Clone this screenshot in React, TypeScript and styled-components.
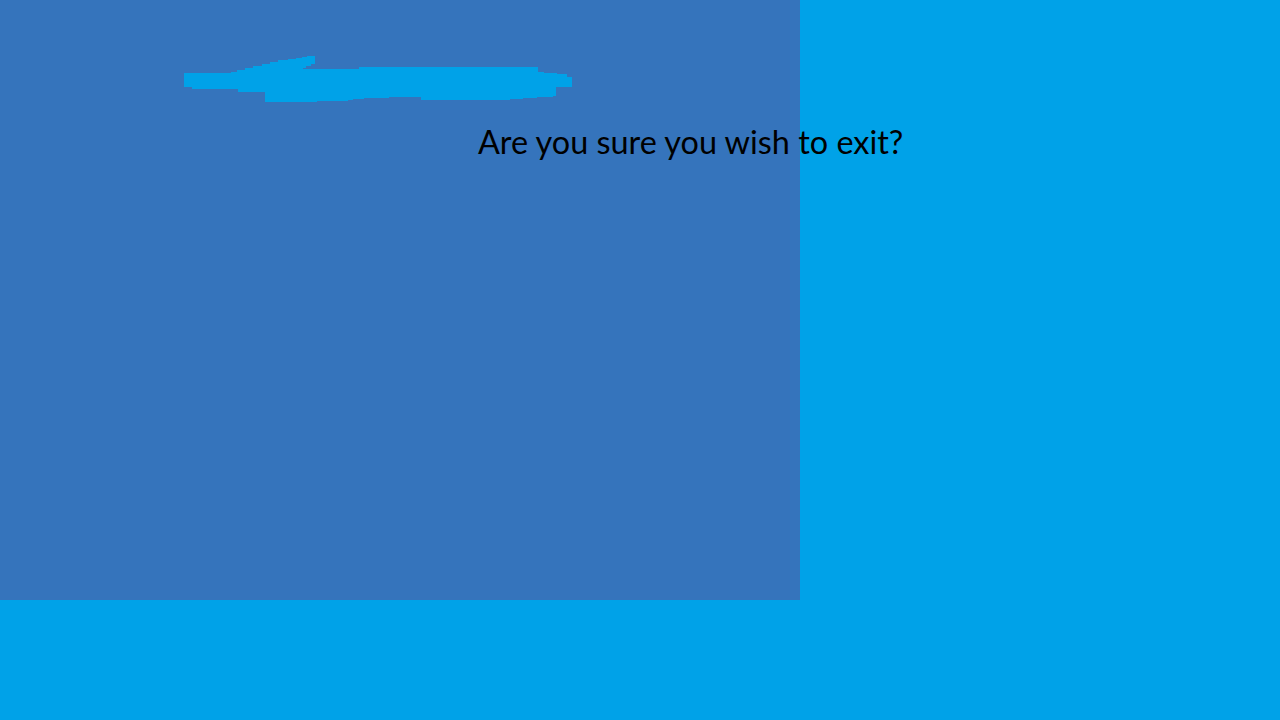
import React from "react";
import styled, { createGlobalStyle } from "styled-components";

const Global = createGlobalStyle`
  html, body { margin: 0; padding: 0; }
  body {
    background: #00a2e8;
    width: 1280px;
    height: 720px;
    overflow: hidden;
    font-family: "Lato", "Open Sans", sans-serif;
  }
`;

const Screen = styled.div`
  width: 1280px;
  height: 720px;
  background: #00a2e8;
`;

const Panel = styled.div`
  width: 800px;
  height: 600px;
  background: #3574bc;
  display: flex;
  flex-direction: column;
  align-items: flex-start;
  padding-top: 56px;
  box-sizing: border-box;
`;

const Stroke = styled.svg`
  display: block;
  margin-left: 184px;
  width: 388px;
  height: 46px;
`;

const Question = styled.div`
  margin-left: 478px;
  margin-top: 22px;
  white-space: nowrap;
  font-family: "Lato", "Open Sans", sans-serif;
  font-size: 32.4px;
  line-height: 36px;
  color: #000;
`;

const pts: [number, number][] = [
  [184, 73], [231, 73], [231, 72], [237, 72], [237, 70], [245, 70], [245, 68],
  [253, 68], [253, 66], [262, 66], [262, 64], [270, 64], [270, 62], [278, 62],
  [278, 60], [288, 60], [288, 59], [296, 59], [296, 58], [302, 58], [302, 57],
  [307, 57], [307, 56], [315, 56], [315, 64], [311, 64], [311, 66], [306, 66],
  [306, 68], [303, 68], [303, 69], [359, 69], [359, 67], [538, 67],
  [538, 72], [544, 72], [544, 73], [557, 73], [557, 74], [567, 74], [567, 77],
  [572, 77], [572, 87],
  [556, 87], [556, 96], [553, 96], [553, 97], [537, 97], [537, 98], [523, 98],
  [523, 99], [510, 99], [510, 100], [421, 100], [421, 97], [389, 97], [389, 98],
  [364, 98], [364, 99], [353, 99], [353, 100], [348, 100], [348, 101], [317, 101],
  [317, 102], [265, 102], [265, 92], [238, 92], [238, 89], [192, 89], [192, 87],
  [184, 87],
];

const points = pts.map(([x, y]) => `${x - 184},${y - 56}`).join(" ");

export default function App() {
  return (
    <>
      <Global />
      <Screen>
        <Panel>
          <Stroke viewBox="0 0 388 46" shapeRendering="crispEdges">
            <polygon points={points} fill="#00a2e8" />
          </Stroke>
          <Question>Are you sure you wish to exit?</Question>
        </Panel>
      </Screen>
    </>
  );
}
